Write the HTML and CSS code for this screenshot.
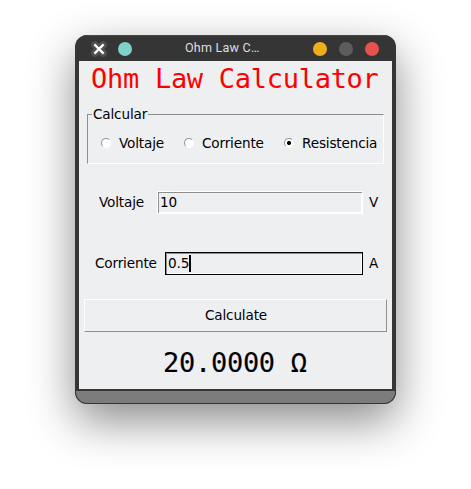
FILE: index.html
```html
<!DOCTYPE html>
<html lang="es">
<head>
<meta charset="utf-8">
<title>Ohm Law Calculator</title>
<link rel="stylesheet" href="styles.css">
</head>
<body>
<main class="window">
  <header class="titlebar">
    <svg class="app-icon" width="16" height="16" viewBox="0 0 16 16"><path d="M4 4L12 12M12 4L4 12" stroke="#505050" stroke-width="7.6" stroke-linecap="round"/><path d="M3.4 3.4L12.6 12.6M12.6 3.4L3.4 12.6" stroke="#fff" stroke-width="2.2"/></svg>
    <span class="dot teal"></span>
    <span class="caption">Ohm Law C…</span>
    <span class="dot yellow"></span>
    <span class="dot gray"></span>
    <span class="dot red"></span>
  </header>
  <section class="content">
    <h1 class="heading">Ohm Law Calculator</h1>
    <div class="group">
      <span class="legend">Calcular</span>
      <div class="options">
        <span class="option first"><i class="radio"></i>Voltaje</span>
        <span class="option second"><i class="radio"></i>Corriente</span>
        <span class="option"><i class="radio checked"></i>Resistencia</span>
      </div>
    </div>
    <div class="row voltage"><span class="label">Voltaje</span><div class="field">10</div><span class="unit">V</span></div>
    <div class="row current"><span class="label">Corriente</span><div class="field focused">0.5<i class="caret"></i></div><span class="unit">A</span></div>
    <div class="button">Calculate</div>
    <div class="result">20.0000 Ω</div>
  </section>
  <footer class="grip"></footer>
</main>
</body>
</html>
```

FILE: styles.css
```css
* { box-sizing: border-box; }
body {
  margin: 0;
  height: 489px;
  padding: 35px 75px 0;
  overflow: hidden;
  background: #fff;
  font: 13.6px/16px "DejaVu Sans", sans-serif;
  letter-spacing: -.16px;
  color: #000;
  white-space: nowrap;
}
.window {
  width: 321px;
  height: 369px;
  display: flex;
  flex-direction: column;
  overflow: hidden;
  background: #353535;
  border-radius: 12px;
  box-shadow: 0 17px 46px rgba(0, 0, 0, .46);
}
.titlebar {
  height: 26px;
  display: flex;
  align-items: center;
  padding: 1px 17px 0 16px;
  border-top: 1px solid #484848;
}
.dot { width: 14px; height: 14px; border-radius: 50%; flex: none; }
.teal { background: #7fd1c9; margin-left: 11px; }
.yellow { background: #f1ae1b; margin-right: 12px; }
.gray { background: #5d5d5d; margin-right: 12px; }
.red { background: #e9524b; }
.caption {
  flex: 1;
  padding: 0 0 2px 53px;
  font: 12.6px/16px Roboto, sans-serif;
  letter-spacing: .2px;
  color: #dedede;
}
.content {
  height: 328px;
  margin: 0 4px;
  padding-top: 2px;
  background: #eeeff1;
}
.heading, .result {
  margin: 0;
  font: 27px/32px "DejaVu Sans Mono", monospace;
  letter-spacing: -.28px;
}
.heading { color: #f00; padding-left: 12px; }
.group {
  width: 297px;
  height: 50px;
  margin: 19px 0 0 8px;
  border: 1px solid;
  border-color: #8e8f90 #fff #fff #8e8f90;
}
.legend {
  display: block;
  width: 56px;
  margin: -9px 0 0 4px;
  padding-left: 1px;
  background: #eeeff1;
}
.options { display: flex; margin: 13px 0 0 13px; }
.option { display: flex; align-items: center; }
.first { width: 83px; }
.second { width: 100px; }
.radio {
  width: 10px;
  height: 10px;
  margin-right: 8px;
  border: 1px solid;
  border-color: #929292 #fff #fff #929292;
  border-radius: 50%;
  background: #fff;
}
.checked { background: radial-gradient(circle, #000 1.8px, #fff 2.3px); }
.row { display: flex; align-items: center; height: 23px; }
.voltage { margin-top: 27px; padding-left: 20px; }
.current { margin-top: 38px; padding-left: 16px; }
.label, .unit { padding-bottom: 2px; }
.voltage .label { width: 58px; }
.current .label { width: 70px; }
.field {
  width: 206px;
  height: 23px;
  padding: 1px 0 0 2px;
  border: 1px solid #fff;
  box-shadow: inset 1px 1px #8e8f90, inset -1px -1px #fff;
  line-height: 19px;
}
.focused { width: 198px; border-color: #000; }
.unit { margin-left: 6px; }
.caret {
  display: inline-block;
  width: 2px;
  height: 17px;
  margin-top: 1px;
  vertical-align: top;
  background: #000;
}
.button {
  width: 303px;
  height: 33px;
  margin: 24px 0 0 5px;
  padding-left: 1px;
  border: 1px solid;
  border-color: #fff #8e8f90 #8e8f90 #fff;
  line-height: 31px;
  text-align: center;
}
.result {
  margin-top: 15px;
  padding-left: 84px;
  -webkit-text-stroke: .15px #000;
}
.grip {
  flex: 1;
  margin-top: 2px;
  border: 1px solid #353535;
  border-top: 0;
  border-radius: 0 0 12px 12px;
  background: #7c7c7c;
}
```
